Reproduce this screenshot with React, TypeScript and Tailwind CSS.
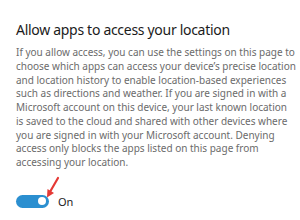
import React from 'react';

const lines = [
  'If you allow access, you can use the settings on this page to',
  'choose which apps can access your device\u2019s precise location',
  'and location history to enable location-based experiences',
  'such as directions and weather. If you are signed in with a',
  'Microsoft account on this device, your last known location',
  'is saved to the cloud and shared with other devices where',
  'you are signed in with your Microsoft account. Denying',
  'access only blocks the apps listed on this page from',
  'accessing your location.',
];

export default function App() {
  return (
    <div className="w-[300px] h-[220px] bg-white overflow-hidden relative font-['Segoe_UI','Noto_Sans',sans-serif]">
      <div className="pl-[16px] pt-[20px]">
        <h1 className="text-[14px] leading-[20px] text-[#1b1b1b] font-normal tracking-[-0.3px]">
          Allow apps to access your location
        </h1>
        <p className="mt-[6px] text-[10px] leading-[13.75px] text-[#6b6b6b]">
          {lines.map((l, i) => (
            <span key={i} className="block whitespace-nowrap">{l}</span>
          ))}
        </p>

        {/* toggle */}
        <div className="mt-[25px] flex items-center gap-[9px]">
          <div className="w-[33px] h-[13px] rounded-full bg-[#2b8fd0] flex items-center justify-end pr-[3px]">
            <div className="w-[8px] h-[8px] rounded-full bg-white" />
          </div>
          <span className="text-[11px] leading-[13px] text-[#1b1b1b]">On</span>
        </div>
      </div>

      {/* red callout arrow */}
      <svg className="absolute left-[40px] top-[172px]" width="24" height="30" viewBox="0 0 24 30">
        <line x1="18" y1="6" x2="10.5" y2="19" stroke="#e53935" strokeWidth="2.2" strokeLinecap="round" />
        <polygon points="7,25.5 7.5,17 14,21" fill="#e53935" />
      </svg>
    </div>
  );
}
